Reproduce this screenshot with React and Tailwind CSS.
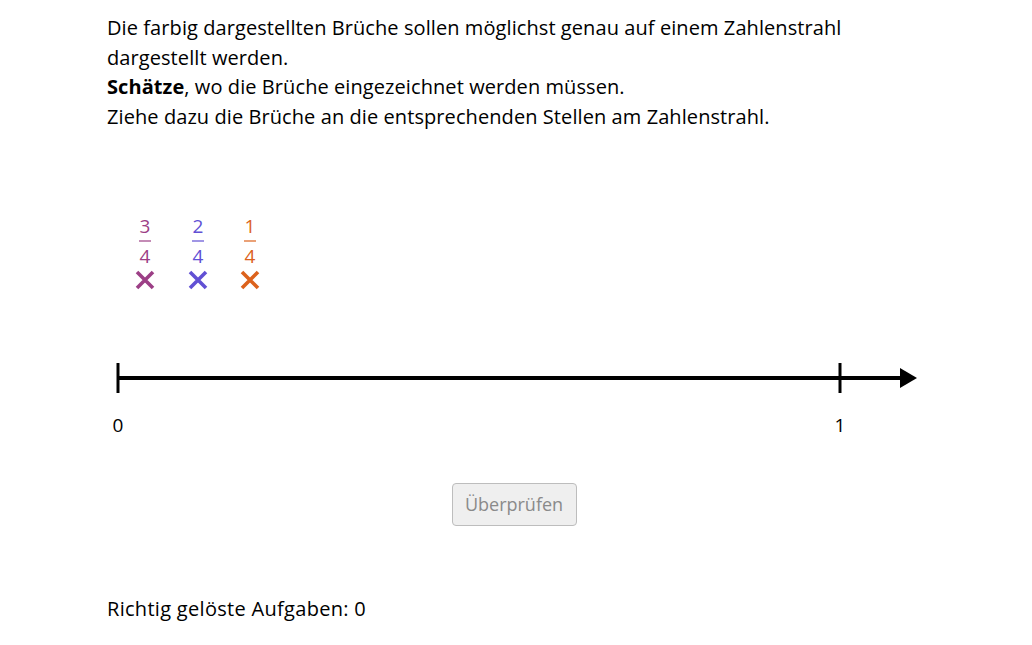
import React from "react";

const fractions = [
  { num: 3, den: 4, x: 145, color: "text-[#9c3f86]", stroke: "#9c3f86" },
  { num: 2, den: 4, x: 198, color: "text-[#6150d4]", stroke: "#6150d4" },
  { num: 1, den: 4, x: 250, color: "text-[#dc621c]", stroke: "#dc621c" },
];

const Cross = ({ stroke }) => (
  <svg width="20" height="20" viewBox="0 0 20 20">
    <path d="M2 2 L18 18 M18 2 L2 18" stroke={stroke} strokeWidth="3.6" strokeLinecap="butt" />
  </svg>
);

const Fraction = ({ f }) => (
  <div
    className={`absolute flex flex-col items-center ${f.color}`}
    style={{ left: f.x - 15, top: 72, width: 30 }}
  >
    <span className="leading-[28px] text-[19px]">{f.num}</span>
    <span className="block w-[12px] h-[2px] bg-current opacity-60" />
    <span className="leading-[28px] text-[19px]">{f.den}</span>
    <Cross stroke={f.stroke} />
  </div>
);

const App = () => {
  return (
    <div
      className="w-[1032px] h-[645px] bg-white text-black overflow-hidden"
      style={{ fontFamily: "'Open Sans', sans-serif" }}
    >
      <div className="pl-[107px] pt-[13px] text-[20px] leading-[29.7px] tracking-[0.08px]">
        <p>
          Die farbig dargestellten Brüche sollen möglichst genau auf einem Zahlenstrahl
          <br />
          dargestellt werden.
        </p>
        <p>
          <b>Schätze</b>, wo die Brüche eingezeichnet werden müssen.
        </p>
        <p>Ziehe dazu die Brüche an die entsprechenden Stellen am Zahlenstrahl.</p>
      </div>

      <div className="relative h-[330px] mt-[8px]">
        {fractions.map((f) => (
          <Fraction key={f.num} f={f} />
        ))}
        <svg
          className="absolute left-0 top-0"
          width="1032"
          height="330"
          viewBox="0 140 1032 330"
        >
          <line x1="118" y1="378" x2="903" y2="378" stroke="#000" strokeWidth="4" />
          <line x1="118" y1="363" x2="118" y2="393" stroke="#000" strokeWidth="3" />
          <line x1="840" y1="363" x2="840" y2="393" stroke="#000" strokeWidth="3" />
          <polygon points="900,368 917,378 900,388" fill="#000" />
        </svg>
        <span className="absolute text-[19px] leading-[24px] w-[20px] text-center" style={{ left: 108, top: 273 }}>
          0
        </span>
        <span className="absolute text-[19px] leading-[24px] w-[20px] text-center" style={{ left: 830, top: 273 }}>
          1
        </span>
      </div>

      <div className="flex justify-center pr-[4px] mt-[13px]">
        <button className="w-[125px] h-[43px] rounded-[4px] border border-[#bdbdbd] bg-[#efefef] text-[#8a8a8a] text-[18px]">
          Überprüfen
        </button>
      </div>

      <div className="pl-[107px] mt-[68px] text-[20px] leading-[30px] tracking-[0.3px]">
        Richtig gelöste Aufgaben: 0
      </div>
    </div>
  );
};

export default App;
